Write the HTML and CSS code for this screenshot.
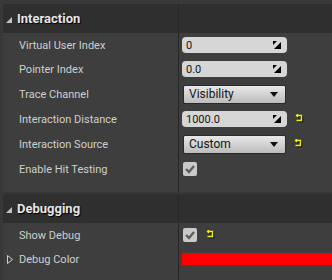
FILE: index.html
```html
<!DOCTYPE html>
<html lang="en">
<head>
    <meta charset="UTF-8">
    <title>Details</title>
    <link rel="stylesheet" href="styles.css">
</head>
<body>
    <div class="panel">
        <div class="category">
            <div class="cat-head">
                <div class="cat-name">
                    <svg class="tri" width="6" height="6" viewBox="0 0 6 6"><polygon points="6,0 6,6 0,6"/></svg>
                    Interaction
                </div>
                <div class="cat-fill"></div>
            </div>
            <div class="rows">
                <div class="name">Virtual User Index</div>
                <div class="value">
                    <div class="numbox"><span>0</span>
                        <svg class="drag" width="8" height="8" viewBox="0 0 8 8"><polygon points="0,0 4,0 0,4"/><polygon points="8,1 8,8 1,8"/></svg>
                    </div>
                </div>

                <div class="name">Pointer Index</div>
                <div class="value">
                    <div class="numbox"><span>0.0</span>
                        <svg class="drag" width="8" height="8" viewBox="0 0 8 8"><polygon points="0,0 4,0 0,4"/><polygon points="8,1 8,8 1,8"/></svg>
                    </div>
                </div>

                <div class="name tall">Trace Channel</div>
                <div class="value tall">
                    <div class="combo"><span>Visibility</span>
                        <svg width="8" height="5" viewBox="0 0 8 5"><polygon points="0,0 8,0 4,5"/></svg>
                    </div>
                </div>

                <div class="name">Interaction Distance</div>
                <div class="value">
                    <div class="numbox"><span>1000.0</span>
                        <svg class="drag" width="8" height="8" viewBox="0 0 8 8"><polygon points="0,0 4,0 0,4"/><polygon points="8,1 8,8 1,8"/></svg>
                    </div>
                    <svg class="reset" width="10" height="10" viewBox="0 0 10 10">
                        <path class="shadow" d="M3 2.5 H7.5 V7.5 H2.5 M4 1 L2.5 2.5 L4 4"/>
                        <path d="M2 1.5 H6.5 V6.5 H1.5 M3 0 L1.5 1.5 L3 3"/>
                    </svg>
                </div>

                <div class="name tall">Interaction Source</div>
                <div class="value tall">
                    <div class="combo"><span>Custom</span>
                        <svg width="8" height="5" viewBox="0 0 8 5"><polygon points="0,0 8,0 4,5"/></svg>
                    </div>
                    <svg class="reset" width="10" height="10" viewBox="0 0 10 10">
                        <path class="shadow" d="M3 2.5 H7.5 V7.5 H2.5 M4 1 L2.5 2.5 L4 4"/>
                        <path d="M2 1.5 H6.5 V6.5 H1.5 M3 0 L1.5 1.5 L3 3"/>
                    </svg>
                </div>

                <div class="name">Enable Hit Testing</div>
                <div class="value">
                    <div class="check"><svg width="14" height="14" viewBox="0 0 14 14"><polyline points="3,7 6,10 11,4"/></svg></div>
                </div>

                <div class="filler"></div>
                <div class="value filler"></div>
            </div>
        </div>

        <div class="category">
            <div class="cat-head">
                <div class="cat-name">
                    <svg class="tri" width="6" height="6" viewBox="0 0 6 6"><polygon points="6,0 6,6 0,6"/></svg>
                    Debugging
                </div>
                <div class="cat-fill"></div>
            </div>
            <div class="rows">
                <div class="name">Show Debug</div>
                <div class="value">
                    <div class="check"><svg width="14" height="14" viewBox="0 0 14 14"><polyline points="3,7 6,10 11,4"/></svg></div>
                    <svg class="reset near" width="10" height="10" viewBox="0 0 10 10">
                        <path class="shadow" d="M3 2.5 H7.5 V7.5 H2.5 M4 1 L2.5 2.5 L4 4"/>
                        <path d="M2 1.5 H6.5 V6.5 H1.5 M3 0 L1.5 1.5 L3 3"/>
                    </svg>
                </div>

                <div class="name expand">
                    <svg class="open" width="6" height="9" viewBox="0 0 6 9"><polygon points="0.5,0.5 5.5,4.5 0.5,8.5"/></svg>
                    Debug Color
                </div>
                <div class="value">
                    <div class="color" style="background: #ff0000;"></div>
                </div>

                <div class="filler"></div>
                <div class="value filler"></div>
            </div>
        </div>
    </div>
</body>
</html>
```

FILE: styles.css
```css
body { margin: 0; background: #383838; font-family: Roboto, "Liberation Sans", sans-serif; font-size: 11px; }
.panel { width: 332px; height: 280px; padding: 4px 0 0 3px; box-sizing: border-box; overflow: hidden; }
.category { margin-bottom: 2px; }
.cat-head { display: grid; grid-template-columns: 175px 1fr; height: 29px; background: #2f2f2f; border-radius: 3px 0 0 0; }
.cat-name { display: flex; align-items: center; gap: 5px; padding-left: 3px; color: #e6e6e6; font-weight: bold; font-size: 13px; text-shadow: 1px 1px 1px #000; }
.cat-name .tri { fill: #c2c2c2; margin-top: 2px; }
.cat-fill { border-left: 1px solid #282828; }
.rows { display: grid; grid-template-columns: 175px 1fr; background: #3e3e3e; }
.name { height: 24px; display: flex; align-items: center; padding-left: 16px; color: #cfcfcf; }
.value { height: 24px; display: flex; align-items: center; padding-left: 3px; border-left: 1px solid #262626; }
.tall { height: 26px; }
.filler { height: 11px; }
.rows .filler + .value { height: 11px; }
.numbox { width: 105px; height: 16px; box-sizing: border-box; background: #d6d6d6; border-radius: 4px; display: flex; align-items: center; justify-content: space-between; padding: 0 6px 0 4px; color: #141414; }
.drag { fill: #000; }
.combo { width: 103px; height: 19px; margin-left: 1px; box-sizing: border-box; border: 1px solid #2a2a2a; border-radius: 2px; background: linear-gradient(#e8e8e8, #bcbcbc); display: flex; align-items: center; justify-content: space-between; padding: 0 7px 0 5px; color: #141414; font-size: 12px; }
.combo svg { fill: #111; }
.reset { margin-left: 8px; fill: none; stroke: #f0f000; stroke-width: 1.4; }
.reset .shadow { stroke: #101010; }
.reset.near { margin-left: 9px; }
.check { width: 14px; height: 14px; margin-left: 1px; background: #cacaca; border-radius: 2px; }
.check svg { fill: none; stroke: #5e5e5e; stroke-width: 2.4; }
.expand { padding-left: 4px; gap: 6px; }
.open { fill: none; stroke: #d0d0d0; stroke-width: 1; }
.color { height: 12px; flex: 1; }
```
